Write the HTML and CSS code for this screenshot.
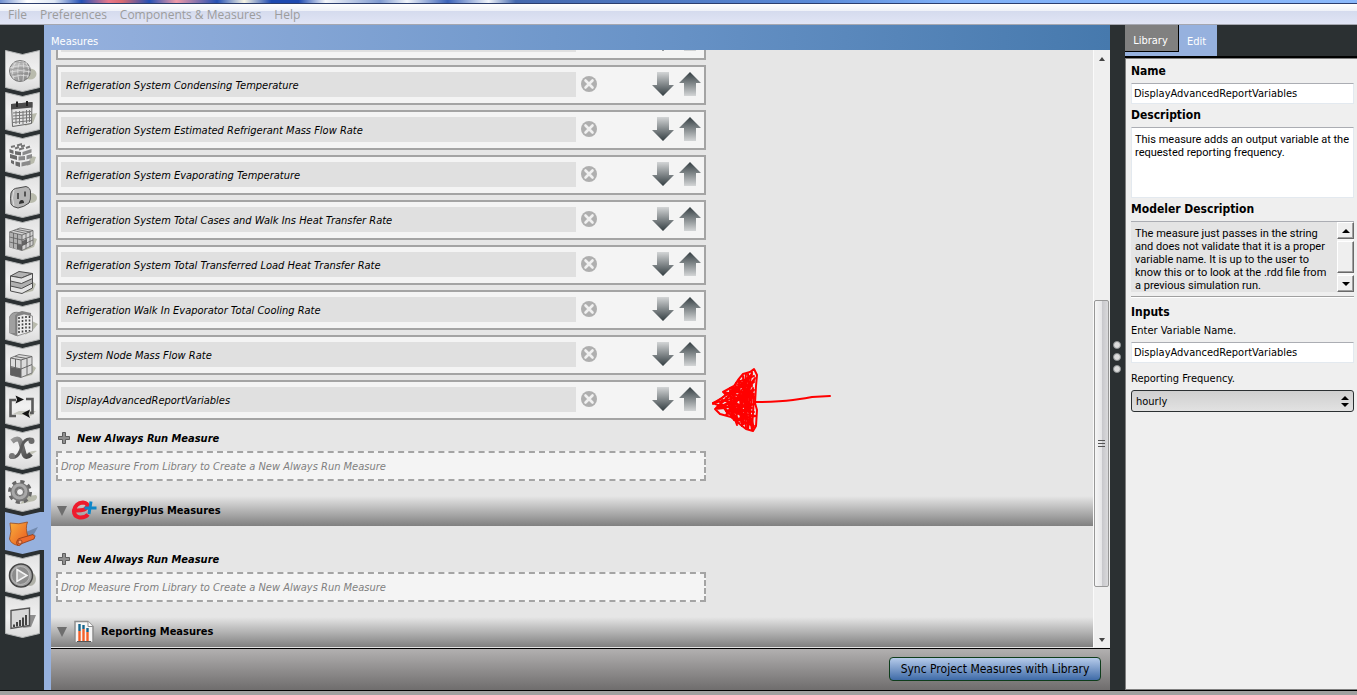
FILE: index.html
```html
<!DOCTYPE html>
<html lang="en">
<head>
  <meta charset="UTF-8">
  <title>OpenStudio - Measures</title>
  <link rel="stylesheet" href="styles.css">
</head>
<body>
  <!-- shared shapes -->
  <svg class="defs" width="0" height="0" aria-hidden="true">
    <defs>
      <linearGradient id="tile-fill" x1="0" y1="0" x2="0" y2="1">
        <stop offset="0" stop-color="#e2e2e2"/>
        <stop offset="0.5" stop-color="#f1f1f1"/>
        <stop offset="1" stop-color="#dadada"/>
      </linearGradient>
      <linearGradient id="metal" x1="0" y1="0" x2="1" y2="1">
        <stop offset="0" stop-color="#d0d0d0"/>
        <stop offset="1" stop-color="#808080"/>
      </linearGradient>
      <linearGradient id="dark-metal" x1="0" y1="0" x2="1" y2="1">
        <stop offset="0" stop-color="#9a9a9a"/>
        <stop offset="1" stop-color="#484848"/>
      </linearGradient>
      <linearGradient id="down-fill" x1="0" y1="0" x2="0" y2="1">
        <stop offset="0" stop-color="#d3d5d6"/>
        <stop offset="1" stop-color="#343e42"/>
      </linearGradient>
      <linearGradient id="up-fill" x1="0" y1="0" x2="0" y2="1">
        <stop offset="0" stop-color="#343e42"/>
        <stop offset="1" stop-color="#d3d5d6"/>
      </linearGradient>
      <linearGradient id="orange" x1="0" y1="0" x2="1" y2="1">
        <stop offset="0" stop-color="#f9b03c"/>
        <stop offset="1" stop-color="#e8561f"/>
      </linearGradient>
      <symbol id="tile" viewBox="0 0 39 42">
        <path d="M0.5 0.5L17.5 4.5L34.5 0.5V37.5L17.5 41.5L0.5 37.5Z" fill="url(#tile-fill)" stroke="#b4b6b6"/>
      </symbol>
      <symbol id="remove" viewBox="0 0 16 16">
        <circle cx="8" cy="8" r="8" fill="#afafaf"/>
        <path d="M4.5 4.5L11.5 11.5M11.5 4.5L4.5 11.5" stroke="#f0f0f0" stroke-width="2.6" stroke-linecap="round"/>
      </symbol>
      <symbol id="down" viewBox="0 0 22 24">
        <path d="M5 0H17V13H22L11 24L0 13H5Z" fill="url(#down-fill)"/>
      </symbol>
      <symbol id="up" viewBox="0 0 22 24">
        <path d="M11 0L22 11H17V24H5V11H0Z" fill="url(#up-fill)"/>
      </symbol>
      <symbol id="plus" viewBox="0 0 12 12">
        <path d="M4.5 0.5H7.5V4.5H11.5V7.5H7.5V11.5H4.5V7.5H0.5V4.5H4.5Z" fill="#8f8f8f" stroke="#5d5d5d"/>
      </symbol>
    </defs>
  </svg>

  <div class="window-edge"></div>
  <nav class="menubar">
    <a href="#">File</a>
    <a href="#">Preferences</a>
    <a href="#">Components &amp; Measures</a>
    <a href="#">Help</a>
  </nav>

  <div class="app">
    <nav class="rail">
      <button class="tab" aria-label="Site">
        <svg viewBox="0 0 39 42"><use href="#tile"/>
          <ellipse cx="25" cy="24" rx="6.5" ry="5.500" fill="#b9bbad"/>
          <circle cx="15" cy="21" r="10.500" fill="url(#metal)" stroke="#7a7a7a"/>
          <path d="M5 18Q15 14 25 17M5 22Q15 19 26 22M7 27Q15 24 24 26M8 13Q15 11 22 13M15 11Q11 20 14 31M11 12Q5 20 9 29M18 11Q20 20 18 31M21 13Q26 20 22 28" fill="none" stroke="#e0e0e0" stroke-width="0.800"/>
          <path d="M6 20Q15 16 25 20M7 25Q15 22 24 24M9 12Q15 13 21 12" fill="none" stroke="#8a8a8a" stroke-width="0.600"/>
        </svg>
      </button>
      <button class="tab" aria-label="Schedules">
        <svg viewBox="0 0 39 42"><use href="#tile"/>
          <path d="M26 22L32 21L28 31L20 34Z" fill="#b9bbad"/>
          <path d="M6.500 12.500L27 10.500L26.500 31.500L7.500 34.500Z" fill="#e4e4e4" stroke="#666"/>
          <path d="M6 12L27.500 10V15.500L6 17.500Z" fill="#4c4c4c"/>
          <path d="M12 9.500V15M22 9V14" stroke="#222" stroke-width="2"/>
          <path d="M8 21L26 19.500M8 24L26 22.500M8 27L26 25.500M8 30.500L26 28.500M11 19V32M14.500 19V32M18 19V32M21.500 18V31M24.500 18V30" fill="none" stroke="#777"/>
        </svg>
      </button>
      <button class="tab" aria-label="Constructions">
        <svg viewBox="0 0 39 42"><use href="#tile"/>
          <path d="M26 22L31 23L29 29L22 32Z" fill="#b9bbad"/>
          <path d="M5 13L15 9.500L27 12L18 16.500Z" fill="#f4f4f4"/>
          <path d="M6 13L10 12M12 11.500L17 10M10 14.500L14 13M16 12.500L20 11.500M14 15.500L19 14M21 14L25 12.500" stroke="#777" stroke-width="2"/>
          <path d="M4.500 15L8.500 16.500V20L4.500 18.500ZM10 17L16 18V21.500L10 20.500ZM5 20L12 22V26L5 24ZM6 26L9 27V30.500L6 29ZM10.500 27.500L15 28.500V33L10.500 31.500Z" fill="#6b6b6b"/>
          <path d="M17.500 18L26.500 15V18.500L17.500 21.500ZM13.500 22.500L20 22V26L13.500 26.500ZM21.500 21.500L27 20V24L21.500 25.500ZM16.500 28.500L25.500 26.500V30.500L16.500 32.500Z" fill="#8b8b8b"/>
        </svg>
      </button>
      <button class="tab" aria-label="Loads">
        <svg viewBox="0 0 39 42"><use href="#tile"/>
          <ellipse cx="26" cy="22" rx="6" ry="5" fill="#b9bbad"/>
          <path d="M6 17Q8 12 13 12L21 10.500Q26 12 25.500 17Q26 24 24 27Q19 31 13 32Q7 31 6 28Q5 22 6 17Z" fill="#b5b5b5" stroke="#4b4b4b"/>
          <path d="M9 14Q6 22 9 30" fill="none" stroke="#dedede"/>
          <path d="M13 17V23M20 15.500V20.500" stroke="#333" stroke-width="1.500"/>
          <path d="M14 28Q14 24 17 24Q19 24 19 27Z" fill="#333"/>
        </svg>
      </button>
      <button class="tab" aria-label="Space Types">
        <svg viewBox="0 0 39 42"><use href="#tile"/>
          <path d="M27 19L32 21L29 29L18 33Z" fill="#b9bbad"/>
          <path d="M4.500 14L15 10L28 12.500V27L17 32.500L4.500 29Z" fill="#d4d4d4" stroke="#7c7c7c"/>
          <path d="M4.500 14L17 17V32.500L4.500 29Z" fill="#b0b0b0"/>
          <path d="M17 23L22 21V26L17 28ZM12 26L17 27.500V32.500L12 31Z" fill="#666"/>
          <path d="M4.500 14L17 17L28 12.500M17 17V32.500M8.500 12.500L21 15.500V30.500M12 11.500L25 14V29M8.500 15V30M12.500 16V31M4.500 19L17 22L28 17.500M4.500 24L17 27L28 22" fill="none" stroke="#5e5e5e" stroke-width="0.800"/>
        </svg>
      </button>
      <button class="tab" aria-label="Geometry">
        <svg viewBox="0 0 39 42"><use href="#tile"/>
          <path d="M28 22L31 24L28 31L20 33Z" fill="#b9bbad"/>
          <path d="M5.500 16L14 11.500L27.500 13.500L16.500 18Z" fill="#b2b2b2" stroke="#4d4d4d"/>
          <path d="M5.500 16L16.500 18L27.500 13.500V28L17 33.500L5.500 31Z" fill="#e3e3e3" stroke="#4d4d4d"/>
          <path d="M5.500 21L16.500 23.500L27.500 18.500V23L16.500 28.500L5.500 26Z" fill="#b0b0b0" stroke="#4d4d4d"/>
        </svg>
      </button>
      <button class="tab" aria-label="Facility">
        <svg viewBox="0 0 39 42"><use href="#tile"/>
          <path d="M27 19L33 22L28 28L20 33Z" fill="#b9bbad"/>
          <path d="M4 15Q7 8.500 14 10L17 9L26 11L27 29L11 34L4 31Z" fill="#848484"/>
          <path d="M12 14L19 12L27.500 14V29L12 34Z" fill="#ececec" stroke="#777" stroke-width="0.700"/>
          <path d="M6 13Q8 10 13 10.500L10 13.500V31L4 31V16Z" fill="#a0a0a0"/>
          <path d="M14 15V32M17.500 14.500V31M21 14V30M24.500 14V29.500" stroke="#444" stroke-width="1.600" stroke-dasharray="2 1.500"/>
        </svg>
      </button>
      <button class="tab" aria-label="Spaces">
        <svg viewBox="0 0 39 42"><use href="#tile"/>
          <path d="M27 21L31 24L27 31L19 33Z" fill="#b9bbad"/>
          <path d="M5.500 14L14 10.500L27 12.500V29L16 33.500L5.500 31Z" fill="#dcdcdc" stroke="#777"/>
          <path d="M5.500 23L16 25V33.500L5.500 31Z" fill="#5f5f5f"/>
          <path d="M16 16V33M5.500 14L16 16L27 12.500M10 12.500L22 14.500V31M5.500 22.500L16 25L27 20.500M10.500 15V24" fill="none" stroke="#666"/>
        </svg>
      </button>
      <button class="tab" aria-label="Thermal Zones">
        <svg viewBox="0 0 39 42"><use href="#tile"/>
          <path d="M8 28L14 25H31L26 30Z" fill="#c6c7be"/>
          <path d="M11 30H5.500V14H11M21 13H27.500V27H25" fill="none" stroke="#5b5b5b" stroke-width="2.600"/>
          <path d="M10.500 9.500L19 13.500L10.500 17.500L12 13.500ZM25 23.500L17 27.500L25 32L23.500 28Z" fill="#151515"/>
        </svg>
      </button>
      <button class="tab" aria-label="HVAC Systems">
        <svg viewBox="0 0 39 42"><use href="#tile"/>
          <path d="M22 25Q29 22 32 23L26 27Z" fill="#c2c3b8"/>
          <path d="M7 13.500Q14 8 16 15L19 26Q21 31 26 26" fill="none" stroke="url(#dark-metal)" stroke-width="5"/>
          <path d="M28 11.500Q20 9 17 18Q14 28 10 29Q6 30 5 28" fill="none" stroke="#5a5a5a" stroke-width="3"/>
          <circle cx="26.500" cy="13" r="3" fill="#6b6b6b"/>
          <circle cx="7" cy="28" r="3" fill="#777"/>
        </svg>
      </button>
      <button class="tab" aria-label="Variables">
        <svg viewBox="0 0 39 42"><use href="#tile"/>
          <path d="M22 26L31 25Q34 28 29 31L15 34Z" fill="#b9bbad"/>
          <circle cx="15" cy="22" r="10" fill="none" stroke="#666" stroke-width="4" stroke-dasharray="4 3.850"/>
          <circle cx="15" cy="22" r="6.500" fill="none" stroke="#777" stroke-width="6"/>
          <circle cx="14.500" cy="21.500" r="6.500" fill="none" stroke="#a8a8a8" stroke-width="3"/>
          <circle cx="15" cy="22" r="3.500" fill="#efefef" stroke="#666"/>
        </svg>
      </button>
      <button class="tab" aria-label="Measures" aria-current="page">
        <svg viewBox="0 0 39 42">
          <path d="M0 0L17.500 4L35 0H39V38H35L17.500 42L0 38Z" fill="#96b1de"/>
          <path d="M21 20L33 15L29 22L31 24L22 29Z" fill="#7189ad"/>
          <path d="M5 11Q14 13 22.500 10Q20 16 23 25L13 29V33.500Q6 32 4.500 27Q7 20 5 11Z" fill="url(#orange)" stroke="#9b4a1a" stroke-width="0.800"/>
          <path d="M12 29Q13 26 16 26L28 22.500Q31 24 29 27L17 31.500Q14 35 12.500 33Q11 31 12 29Z" fill="#ed6a2c" stroke="#8e3815" stroke-width="0.800"/>
          <circle cx="15" cy="30" r="2" fill="#f6a070" stroke="#8e3815" stroke-width="0.800"/>
        </svg>
      </button>
      <button class="tab" aria-label="Run Simulation">
        <svg viewBox="0 0 39 42"><use href="#tile"/>
          <ellipse cx="25" cy="25" rx="6" ry="7" fill="#b0b1a8"/>
          <circle cx="16" cy="21.500" r="11.500" fill="#a2a2a2" stroke="#454545" stroke-width="1.500"/>
          <circle cx="15.500" cy="21.500" r="9" fill="#8c8c8c" stroke="#b8b8b8"/>
          <path d="M12 15.500L22 21.500L12 27.500Z" fill="#b0b0b0" stroke="#f4f4f4" stroke-width="1.500"/>
        </svg>
      </button>
      <button class="tab" aria-label="Results Summary">
        <svg viewBox="0 0 39 42"><use href="#tile"/>
          <path d="M24 19L31 19L26 31L18 32Z" fill="#8f8f8f"/>
          <path d="M6 14.500L24.500 12V29.500L6 32.500Z" fill="#d8d8d8" stroke="#555" stroke-width="1.400"/>
          <path d="M9 31V28.500M12 30.500V26M15 30V24M18 30V21.500M21 29V19" stroke="#444" stroke-width="2"/>
        </svg>
      </button>
    </nav>

    <main class="content">
      <h1 class="content-title">Measures</h1>

      <div class="scroll-area">
        <div class="measures">
          <ul class="measure-list">
            <li class="measure">
              <input type="text" class="measure-name" aria-label="Measure name" value="">
              <button class="icon-btn remove" aria-label="Remove"><svg width="16" height="16"><use href="#remove"/></svg></button>
              <button class="icon-btn" aria-label="Move down"><svg width="22" height="24"><use href="#down"/></svg></button>
              <button class="icon-btn" aria-label="Move up"><svg width="22" height="24"><use href="#up"/></svg></button>
            </li>
            <li class="measure">
              <input type="text" class="measure-name" aria-label="Measure name" value="Refrigeration System Condensing Temperature">
              <button class="icon-btn remove" aria-label="Remove"><svg width="16" height="16"><use href="#remove"/></svg></button>
              <button class="icon-btn" aria-label="Move down"><svg width="22" height="24"><use href="#down"/></svg></button>
              <button class="icon-btn" aria-label="Move up"><svg width="22" height="24"><use href="#up"/></svg></button>
            </li>
            <li class="measure">
              <input type="text" class="measure-name" aria-label="Measure name" value="Refrigeration System Estimated Refrigerant Mass Flow Rate">
              <button class="icon-btn remove" aria-label="Remove"><svg width="16" height="16"><use href="#remove"/></svg></button>
              <button class="icon-btn" aria-label="Move down"><svg width="22" height="24"><use href="#down"/></svg></button>
              <button class="icon-btn" aria-label="Move up"><svg width="22" height="24"><use href="#up"/></svg></button>
            </li>
            <li class="measure">
              <input type="text" class="measure-name" aria-label="Measure name" value="Refrigeration System Evaporating Temperature">
              <button class="icon-btn remove" aria-label="Remove"><svg width="16" height="16"><use href="#remove"/></svg></button>
              <button class="icon-btn" aria-label="Move down"><svg width="22" height="24"><use href="#down"/></svg></button>
              <button class="icon-btn" aria-label="Move up"><svg width="22" height="24"><use href="#up"/></svg></button>
            </li>
            <li class="measure">
              <input type="text" class="measure-name" aria-label="Measure name" value="Refrigeration System Total Cases and Walk Ins Heat Transfer Rate">
              <button class="icon-btn remove" aria-label="Remove"><svg width="16" height="16"><use href="#remove"/></svg></button>
              <button class="icon-btn" aria-label="Move down"><svg width="22" height="24"><use href="#down"/></svg></button>
              <button class="icon-btn" aria-label="Move up"><svg width="22" height="24"><use href="#up"/></svg></button>
            </li>
            <li class="measure">
              <input type="text" class="measure-name" aria-label="Measure name" value="Refrigeration System Total Transferred Load Heat Transfer Rate">
              <button class="icon-btn remove" aria-label="Remove"><svg width="16" height="16"><use href="#remove"/></svg></button>
              <button class="icon-btn" aria-label="Move down"><svg width="22" height="24"><use href="#down"/></svg></button>
              <button class="icon-btn" aria-label="Move up"><svg width="22" height="24"><use href="#up"/></svg></button>
            </li>
            <li class="measure">
              <input type="text" class="measure-name" aria-label="Measure name" value="Refrigeration Walk In Evaporator Total Cooling Rate">
              <button class="icon-btn remove" aria-label="Remove"><svg width="16" height="16"><use href="#remove"/></svg></button>
              <button class="icon-btn" aria-label="Move down"><svg width="22" height="24"><use href="#down"/></svg></button>
              <button class="icon-btn" aria-label="Move up"><svg width="22" height="24"><use href="#up"/></svg></button>
            </li>
            <li class="measure">
              <input type="text" class="measure-name" aria-label="Measure name" value="System Node Mass Flow Rate">
              <button class="icon-btn remove" aria-label="Remove"><svg width="16" height="16"><use href="#remove"/></svg></button>
              <button class="icon-btn" aria-label="Move down"><svg width="22" height="24"><use href="#down"/></svg></button>
              <button class="icon-btn" aria-label="Move up"><svg width="22" height="24"><use href="#up"/></svg></button>
            </li>
            <li class="measure">
              <input type="text" class="measure-name" aria-label="Measure name" value="DisplayAdvancedReportVariables">
              <button class="icon-btn remove" aria-label="Remove"><svg width="16" height="16"><use href="#remove"/></svg></button>
              <button class="icon-btn" aria-label="Move down"><svg width="22" height="24"><use href="#down"/></svg></button>
              <button class="icon-btn" aria-label="Move up"><svg width="22" height="24"><use href="#up"/></svg></button>
              <!-- hand drawn pointer -->
              <svg class="scribble" viewBox="0 0 124 68" aria-hidden="true">
                <path d="M47 36Q70 36 85 34T104 31L122 30"/>
                <path d="M5 37L14 32L20 27L15 26L26 20L30 14L35 8L42 6L46 3L49 9L48 20L47 37L49 44L48 60L45 65L38 63L29 56L23 51L12 48L7 43L17 42L5 37"/>
                <path d="M5 38L40 14L8 42L44 8L18 49L47 12L26 54L42 20L34 60L45 22L40 63L36 14L44 64L46 30L30 18L36 58L24 24L30 57L18 32L26 53L12 36L20 48"/>
                <path d="M5 37L46 28L10 42L47 38L18 45L48 50L28 53L46 60M16 27L46 32L22 22L44 20L30 16L46 10M38 8L32 56M44 6L38 34L46 62M28 17L25 48L29 59M14 34L44 42L20 36L40 52"/>
                <path d="M31 14L34 60M35 10L38 62M40 8L42 50M22 24L24 50M17 28L46 24L14 40L46 46L24 44L44 56M20 30L40 36M30 22L46 16"/>
              </svg>
            </li>
          </ul>
          <h3 class="new-measure"><svg width="12" height="12"><use href="#plus"/></svg>New Always Run Measure</h3>
          <div class="drop-zone">Drop Measure From Library to Create a New Always Run Measure</div>

          <h2 class="section">
            <span class="caret"></span>
            <svg class="section-icon" viewBox="0 0 26 22" aria-hidden="true">
              <path d="M17 14.500Q14 18 8.500 17.500Q2.500 16 3 10.500Q4.500 3 12 2.500Q17.500 3 16 7Q14.500 11 3.500 10.500" fill="none" stroke="#ee1b2d" stroke-width="4"/>
              <path d="M20 1.500L18 14M13.500 8H25.500" fill="none" stroke="#0d86c8" stroke-width="3"/>
            </svg>
            EnergyPlus Measures
          </h2>
          <div class="empty-list"></div>
          <h3 class="new-measure"><svg width="12" height="12"><use href="#plus"/></svg>New Always Run Measure</h3>
          <div class="drop-zone">Drop Measure From Library to Create a New Always Run Measure</div>

          <h2 class="section">
            <span class="caret"></span>
            <svg class="section-icon" viewBox="0 0 26 24" aria-hidden="true">
              <path d="M4 1.500H17L22 6.500V22.500H4Z" fill="#f6f6f6" stroke="#8d8d8d" stroke-width="1.500"/>
              <path d="M17 1.500V6.500H22" fill="#fff" stroke="#8d8d8d"/>
              <path d="M8.500 4V11M12.500 5V9M16.500 8V12" stroke="#16678e" stroke-width="2.400"/>
              <path d="M8.500 11V21M12.500 9V21M16.500 12V21" stroke="#f4602a" stroke-width="2.400"/>
              <path d="M6 21.500H20" stroke="#555"/>
            </svg>
            Reporting Measures
          </h2>
        </div>

        <div class="scrollbar" aria-hidden="true">
          <span class="arrow-up"></span>
          <span class="thumb"><i></i><i></i><i></i></span>
          <span class="arrow-down"></span>
        </div>
      </div>

      <footer class="footer">
        <button class="sync">Sync Project Measures with Library</button>
      </footer>
    </main>

    <div class="splitter" aria-hidden="true"><i></i><i></i><i></i></div>

    <aside class="sidebar">
      <div class="side-tabs">
        <button class="side-tab">Library</button>
        <button class="side-tab active">Edit</button>
      </div>
      <form class="panel">
        <label class="heading" for="name">Name</label>
        <input type="text" class="field" id="name" value="DisplayAdvancedReportVariables">

        <label class="heading" for="description">Description</label>
        <textarea class="field description" id="description">This measure adds an output variable at the requested reporting frequency.</textarea>

        <label class="heading" for="modeler">Modeler Description</label>
        <div class="modeler">
          <textarea class="modeler-text" id="modeler" readonly>The measure just passes in the string and does not validate that it is a proper variable name. It is up to the user to know this or to look at the .rdd file from a previous simulation run.</textarea>
          <div class="old-scrollbar" aria-hidden="true">
            <span class="bevel"><span class="tri-up"></span></span>
            <span class="bevel old-thumb"></span>
            <span class="bevel"><span class="tri-down"></span></span>
          </div>
        </div>
        <hr>

        <h2 class="heading">Inputs</h2>
        <label class="label" for="variable">Enter Variable Name.</label>
        <input type="text" class="field" id="variable" value="DisplayAdvancedReportVariables">
        <label class="label frequency-label" for="frequency">Reporting Frequency.</label>
        <div class="select">
          <select id="frequency">
            <option>hourly</option>
          </select>
          <span class="tri-up"></span>
          <span class="tri-down"></span>
        </div>
      </form>
    </aside>
  </div>
  <div class="bottom-edge"></div>
</body>
</html>
```
FILE: styles.css
```css
* {
  box-sizing: border-box;
}

body {
  margin: 0;
  height: 100vh;
  display: flex;
  flex-direction: column;
  overflow: hidden;
  background: #2b3032;
  font-family: "DejaVu Sans Condensed", Tahoma, sans-serif;
  font-size: 11px;
  color: #000;
}

button,
input,
textarea,
select {
  font: inherit;
  color: inherit;
  margin: 0;
}

button {
  padding: 0;
  border: 0;
  background: none;
}

h1,
h2,
h3 {
  margin: 0;
  font-size: 11px;
}

.defs {
  position: absolute;
}

/* window chrome */
.window-edge {
  height: 4px;
  flex: none;
  border-bottom: 1px solid #2c3e6e;
  background: linear-gradient(90deg, #6f8fd0 0, #fff 2%, #dfe8f5 4%, #2450b4 6%, #e8788a 8%, #d86a72 9%, #2450b4 11%, #f09aa8 13%, #2450b4 16%, #f6f4e4 18%, #1d49b0 20%, #1d49b0 22%, #f4f6fa 24%, #7f9ad0 28%, #f0f4fa 30%, #3a62b8 33%, #f0f4fa 36%, #4468ae 38%, #5a8ad8 60%, #7fb0f8 70%, #8ab8fb 100%);
}

.menubar {
  height: 21px;
  flex: none;
  display: flex;
  align-items: center;
  gap: 13px;
  padding: 1px 8px 0;
  border-bottom: 1px solid #a5a7b0;
  background: linear-gradient(#fff 0, #eef1f8 35%, #d5dbee 36%, #e1e5f5 100%);
  font-family: "Open Sans", "Segoe UI", sans-serif;
  font-size: 12px;
}

.menubar a {
  color: #9c9c9c;
  text-decoration: none;
}

.app {
  flex: 1;
  min-height: 0;
  display: flex;
}

/* left tab rail */
.rail {
  width: 51px;
  flex: none;
  padding: 25px 0 0 5px;
  border-right: 7px solid #96b1de;
}

.tab {
  display: block;
  width: 39px;
  height: 42px;
}

.tab svg {
  display: block;
  width: 39px;
  height: 42px;
}

/* main column */
.content {
  flex: 1;
  min-width: 0;
  display: flex;
  flex-direction: column;
}

.content-title {
  height: 25px;
  flex: none;
  padding-top: 6px;
  background: linear-gradient(90deg, #96b1de, #6a94c8 55%, #4679ad);
  color: #fff;
  font-weight: normal;
  line-height: 22px;
}

.scroll-area {
  flex: 1;
  min-height: 0;
  display: flex;
  background: #e6e6e6;
}

.measures {
  flex: 1;
  overflow: hidden;
}

/* the list is scrolled, so its first row is cut off */
.measure-list {
  margin: -30px 0 0;
  padding: 0 0 0 5px;
  list-style: none;
  display: flex;
  flex-direction: column;
  gap: 5px;
}

.measure {
  position: relative;
  width: 650px;
  height: 40px;
  display: flex;
  align-items: flex-start;
  gap: 5px;
  padding: 5px 3px;
  border: 2px solid #a4a4a4;
  background: #f4f4f4;
}

.measure-name {
  width: 515px;
  height: 25px;
  padding: 2px 5px 0;
  border: 0;
  background: #e0e0e0;
  font-style: italic;
}

.icon-btn svg {
  display: block;
}

.remove {
  padding-top: 4px;
  margin-right: 50px;
}

.scribble {
  position: absolute;
  left: 650px;
  top: -16px;
  width: 124px;
  height: 68px;
  fill: none;
  stroke: #f00;
  stroke-width: 2;
  stroke-linejoin: round;
  stroke-linecap: round;
}

.new-measure {
  height: 26px;
  display: flex;
  align-items: center;
  gap: 7px;
  margin: 5px 0 0 7px;
  font-style: italic;
}

.drop-zone {
  width: 650px;
  height: 30px;
  margin: 0 0 15px 5px;
  padding: 0 3px;
  border: 2px dashed #a4a4a4;
  background: #f4f4f4;
  color: #808080;
  font-style: italic;
  line-height: 28px;
}

.section {
  height: 30px;
  display: flex;
  align-items: center;
  gap: 4px;
  padding-left: 6px;
  background: linear-gradient(#e6e6e6, #808080);
  line-height: 16px;
}

.caret {
  border: 5px solid transparent;
  border-top: 10px solid #6e6e6e;
  border-bottom: 0;
}

.section-icon {
  width: 26px;
  height: 24px;
}

.empty-list {
  height: 15px;
}

.scrollbar {
  width: 17px;
  flex: none;
  display: flex;
  flex-direction: column;
  align-items: center;
  padding: 7px 1px 6px 0;
  border-left: 1px solid #fafafa;
  background: #efefef;
}

.arrow-up {
  border: 3px solid transparent;
  border-top: 0;
  border-bottom: 4px solid #444;
}

.arrow-down {
  border: 3px solid transparent;
  border-bottom: 0;
  border-top: 4px solid #444;
}

.thumb {
  width: 15px;
  height: 49%;
  margin: auto 0 51px;
  display: flex;
  flex-direction: column;
  align-items: center;
  justify-content: center;
  gap: 2px;
  border: 1px solid #979797;
  border-radius: 2px;
  background: linear-gradient(90deg, #f6f6f6, #e6e6e8 50%, #c6c6ca 51%, #dadadc);
}

.thumb i {
  width: 7px;
  height: 1px;
  background: #555;
}

.footer {
  height: 42px;
  flex: none;
  display: flex;
  align-items: center;
  justify-content: flex-end;
  padding: 0 9px 2px 0;
  border-top: 1px solid #000;
  background: linear-gradient(#b2b0b0, #6f6d6d);
}

.sync {
  width: 212px;
  height: 24px;
  border: 1px solid #0f3d1c;
  border-radius: 4px;
  background: linear-gradient(#b6cbea, #3f6ba8);
  font-size: 12px;
}

.splitter {
  width: 15px;
  flex: none;
  display: flex;
  flex-direction: column;
  align-items: center;
  justify-content: center;
  gap: 4px;
  padding: 0 2px 2px 0;
}

.splitter i {
  width: 8px;
  height: 8px;
  border: 1px solid #8c9092;
  border-radius: 50%;
  background: #dcdcdc;
}

/* right sidebar */
.sidebar {
  width: 232px;
  flex: none;
  display: flex;
  flex-direction: column;
}

.side-tabs {
  height: 33px;
  flex: none;
  display: flex;
  align-items: flex-start;
  border-bottom: 2px solid #000;
}

.side-tab {
  width: 54px;
  height: 31px;
  padding: 4px 3px 0 0;
  border-bottom: 4px solid #96b1de;
  background: #808080;
  box-shadow: inset -1px -1px #000;
  color: #fff;
}

.side-tab.active {
  width: 38px;
  padding-top: 6px;
  background: #96b1de;
  box-shadow: none;
}

.panel {
  flex: 1;
  display: flex;
  flex-direction: column;
  padding: 2px 3px 0 5px;
  border: 1px solid #808080;
  border-right: 0;
  background: #efefef;
}

.heading {
  height: 22px;
  flex: none;
  font-size: 12px;
  font-weight: bold;
  line-height: 20px;
}

.field {
  height: 21px;
  flex: none;
  margin-bottom: 1px;
  padding: 0 2px;
  border: 1px solid #e3e9ef;
  border-top-color: #abadb3;
  background: #fff;
}

textarea {
  resize: none;
  overflow: hidden;
  font-family: Roboto, Tahoma, sans-serif;
  line-height: 13px;
}

.description {
  height: 71px;
  padding: 5px 0 5px 3px;
}

.modeler {
  height: 71px;
  display: flex;
  border-top: 1px solid #abadb3;
  background: #e4e4e4;
}

.modeler-text {
  flex: 1;
  min-width: 0;
  padding: 5px 4px 0;
  border: 0;
  background: none;
}

.old-scrollbar {
  width: 17px;
  display: flex;
  flex-direction: column;
  justify-content: space-between;
  background: #f6f6f6;
}

.bevel {
  height: 17px;
  display: flex;
  align-items: center;
  justify-content: center;
  border: 1px solid #fff;
  border-right-color: #696969;
  border-bottom-color: #696969;
  background: #efefef;
  box-shadow: inset -1px -1px #a0a0a0;
}

.old-thumb {
  height: 32px;
}

.tri-up {
  border: 4px solid transparent;
  border-top: 0;
  border-bottom: 4px solid #000;
}

.tri-down {
  border: 4px solid transparent;
  border-bottom: 0;
  border-top: 4px solid #000;
}

hr {
  width: 100%;
  margin: 4px 0;
  border: 0;
  border-top: 1px solid #a0a0a0;
  border-bottom: 1px solid #fff;
}

.label {
  height: 18px;
  line-height: 14px;
}

.frequency-label {
  margin-top: 8px;
}

.select {
  height: 22px;
  position: relative;
  display: flex;
  flex-direction: column;
  align-items: flex-end;
  justify-content: center;
  gap: 3px;
  padding-right: 4px;
  border: 1px solid #2b3032;
  border-radius: 3px;
  background: linear-gradient(#cfcfcf, #e2e2e2);
}

.select select {
  position: absolute;
  inset: 0;
  padding: 0 4px;
  border: 0;
  background: none;
  appearance: none;
}

.bottom-edge {
  height: 5px;
  flex: none;
  border-top: 1px solid #000;
  background: #a0a0a0;
}
```
